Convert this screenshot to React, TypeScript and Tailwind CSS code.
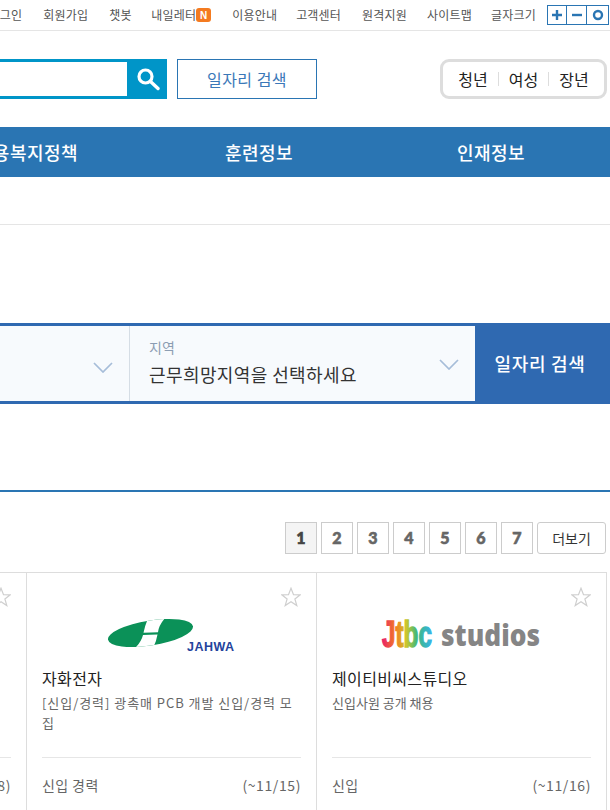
import React from "react";

const KR = { fontFamily: '"Noto Sans CJK KR", "Noto Sans", sans-serif' };

const topItems = [
  { t: "로그인", ml: "ml-0" },
  { t: "회원가입", ml: "ml-[21px]" },
  { t: "챗봇", ml: "ml-[21px]" },
  { t: "내일레터", ml: "ml-[19.5px]" },
  { t: "이용안내", ml: "ml-[21px]" },
  { t: "고객센터", ml: "ml-[19px]" },
  { t: "원격지원", ml: "ml-[21px]" },
  { t: "사이트맵", ml: "ml-[20px]" },
  { t: "글자크기", ml: "ml-[19px]" },
];

function SearchIcon() {
  return (
    <svg width="24" height="24" viewBox="0 0 24 24" fill="none" stroke="white">
      <circle cx="9.5" cy="9.5" r="6.5" strokeWidth="3.2" />
      <path d="M14.5 14.5 L22 21.5" strokeWidth="3.4" strokeLinecap="round" />
    </svg>
  );
}

function Chevron() {
  return (
    <svg width="20" height="11" viewBox="0 0 20 11" fill="none" stroke="#a6bdd9" strokeWidth="1.7">
      <path d="M1 1 L10 10 L19 1" />
    </svg>
  );
}

function StarIcon() {
  return (
    <svg width="20" height="20" viewBox="0 0 20 20" fill="none" stroke="#cfcfcf" strokeWidth="1.2">
      <polygon points="10,1.2 12.5,7.6 19.2,7.8 13.9,12 15.8,18.6 10,14.8 4.2,18.6 6.1,12 0.8,7.8 7.5,7.6" />
    </svg>
  );
}

function JahwaLogo() {
  return (
    <svg width="128" height="34" viewBox="0 0 128 34">
      <defs>
        <clipPath id="jahwaClip">
          <ellipse cx="42.5" cy="15" rx="43" ry="12.5" transform="rotate(-9 42.5 15)" />
        </clipPath>
      </defs>
      <ellipse cx="42.5" cy="15" rx="43" ry="12.5" fill="#0b9158" transform="rotate(-9 42.5 15)" />
      <g clipPath="url(#jahwaClip)" fill="#ffffff">
        <path d="M41 -2 L59 -2 Q51 6 50 14.2 L35.5 14.8 Q37 7 41 -2 Z" />
        <path d="M35 17 L49.5 16.4 Q48 25 44 32 L25 32 Q33 25 35 17 Z" />
      </g>
      <text x="79" y="32.5" fontFamily="Liberation Sans" fontWeight="700" fontSize="12.5" fill="#24439c" letterSpacing="0.5">JAHWA</text>
    </svg>
  );
}

function JtbcLogo() {
  return (
    <div className="flex items-start gap-[8px]">
      <svg width="52" height="34" viewBox="0 0 52 34">
        <defs>
          <linearGradient id="jtbcGrad" gradientUnits="userSpaceOnUse" x1="0" y1="0" x2="51" y2="0">
            <stop offset="0" stopColor="#e8176f" />
            <stop offset="0.3" stopColor="#f2821f" />
            <stop offset="0.5" stopColor="#c9c62f" />
            <stop offset="0.7" stopColor="#3fb87a" />
            <stop offset="1" stopColor="#37b3ea" />
          </linearGradient>
        </defs>
        <text
          x="1"
          y="28.5"
          fontFamily="Liberation Sans"
          fontWeight="700"
          fontSize="36"
          fill="url(#jtbcGrad)"
          stroke="url(#jtbcGrad)"
          strokeWidth="1.4"
          textLength="50"
          lengthAdjust="spacingAndGlyphs"
        >
          Jtbc
        </text>
      </svg>
      <svg width="102" height="34" viewBox="0 0 102 34">
        <text
          x="0"
          y="28"
          fontFamily="Open Sans"
          fontWeight="800"
          fontSize="30"
          fill="#858585"
          textLength="99"
          lengthAdjust="spacingAndGlyphs"
        >
          studios
        </text>
      </svg>
    </div>
  );
}

function JobCard({
  logo,
  title,
  desc,
  kind,
  date,
  wideDesc,
}: {
  logo?: React.ReactNode;
  title: string;
  desc: string;
  kind: string;
  date: string;
  wideDesc?: boolean;
}) {
  return (
    <div className="relative w-[290px] shrink-0 h-[240px] border-r border-[#dddddd] pt-[39px] px-[15px]">
      <div className="absolute right-[15px] top-[14px]">
        <StarIcon />
      </div>
      <div className="h-[54px] pt-[6px] flex justify-center items-start">{logo}</div>
      <div className="h-[24px] leading-[24px] text-[16px] tracking-[0.35px] text-[#222222]">{title}</div>
      <div className={`mt-[3px] h-[64px] text-[13px] leading-[20px] text-[#666666] ${wideDesc ? "tracking-[0.95px]" : ""}`}>{desc}</div>
      <div className="border-t border-[#e6e6e6] pt-[15px] flex justify-between text-[14px] leading-[24px] text-[#666666]">
        <span className="tracking-[0.4px]">{kind}</span>
        <span className="tracking-[0.6px]">{date}</span>
      </div>
    </div>
  );
}

export default function App() {
  return (
    <div className="w-[610px] h-[810px] overflow-hidden bg-white" style={KR}>
      {/* utility bar */}
      <div className="h-[31px] border-b border-[#e5e5e5] flex justify-end items-center pr-[1px] overflow-hidden">
        <div className="flex items-center text-[12px] text-[#555555] whitespace-nowrap tracking-[0.2px] shrink-0">
          {topItems.map(({ t, ml }) => (
            <span key={t} className={`flex items-center ${ml}`}>
              {t}
              {t === "내일레터" && (
                <span
                  className="w-[15px] h-[14px] rounded-[3px] bg-[#f47b20] text-white text-[10px] font-bold flex items-center justify-center tracking-normal"
                  style={{ fontFamily: "Liberation Sans" }}
                >
                  N
                </span>
              )}
            </span>
          ))}
        </div>
        <div className="ml-[11px] flex h-[20px] w-[62px] border border-[#2a75b3] shrink-0 text-[#2a75b3]">
          <div className="w-[19px] flex items-center justify-center border-r border-[#2a75b3]">
            <svg width="12" height="12" viewBox="0 0 12 12" stroke="#2a75b3" strokeWidth="2.4">
              <path d="M6 1 V11 M1 6 H11" />
            </svg>
          </div>
          <div className="w-[20px] flex items-center justify-center border-r border-[#2a75b3]">
            <svg width="12" height="12" viewBox="0 0 12 12" stroke="#2a75b3" strokeWidth="2.4">
              <path d="M1 6 H11" />
            </svg>
          </div>
          <div className="flex-1 flex items-center justify-center">
            <svg width="12" height="12" viewBox="0 0 12 12" fill="none" stroke="#2a75b3" strokeWidth="2.4">
              <circle cx="6" cy="6" r="4" />
            </svg>
          </div>
        </div>
      </div>

      {/* search row */}
      <div className="mt-[28px] h-[40px] flex justify-end pr-[3px] overflow-hidden">
        <div className="w-[300px] shrink-0 h-[40px] border-y-[3px] border-[#0095c8] flex justify-end">
          <div className="w-[40px] h-[40px] -my-[3px] bg-[#0095c8] flex items-center justify-center pl-[2px]">
            <SearchIcon />
          </div>
        </div>
        <div className="ml-[10px] w-[140px] h-[40px] shrink-0 border border-[#2a75b3] flex items-center justify-center text-[16px] tracking-[0.5px] text-[#3b78b8]">
          일자리 검색
        </div>
        <div className="ml-[123px] w-[167px] h-[40px] shrink-0 border-[3px] border-[#dddddd] rounded-[9px] flex items-center justify-center text-[16px] text-[#222222]">
          <span>청년</span>
          <span className="mx-[10px] w-px h-[14px] bg-[#dddddd]" />
          <span>여성</span>
          <span className="mx-[10px] w-px h-[14px] bg-[#dddddd]" />
          <span>장년</span>
        </div>
      </div>

      {/* main nav */}
      <div className="mt-[28px] h-[50px] bg-[#2a75b3] flex ml-[-89px] w-[700px] items-center text-white text-[18px] font-medium tracking-[0.5px]">
        <div className="w-[232px] text-center">고용복지정책</div>
        <div className="w-[232px] text-center">훈련정보</div>
        <div className="w-[232px] text-center">인재정보</div>
      </div>
      <div className="h-[48px] border-b border-[#e5e5e5]" />

      {/* job search band */}
      <div className="mt-[98px] h-[81px] flex">
        <div className="w-[475px] border-y-[3px] border-[#2f69b1] bg-[#f7fafd] flex">
          <div className="w-[130px] border-r border-[#d5dde5] flex justify-end items-center pr-[16px] pt-[8px]">
            <Chevron />
          </div>
          <div className="flex-1 relative pl-[19px] pt-[12px]">
            <div className="text-[14px] leading-[18px] text-[#8c9db3]">지역</div>
            <div className="mt-[5px] text-[18px] leading-[26px] tracking-[0.4px] text-[#333333]">근무희망지역을 선택하세요</div>
            <div className="absolute right-[16px] top-[33px]">
              <Chevron />
            </div>
          </div>
        </div>
        <div className="flex-1 bg-[#2f69b1] flex items-center justify-center text-white text-[18px] font-medium tracking-[0.7px] pr-[5px]">
          일자리 검색
        </div>
      </div>

      {/* section line */}
      <div className="mt-[86px] h-[2px] bg-[#2a75b3]" />

      {/* pagination */}
      <div className="mt-[30px] flex justify-end gap-[4px] pr-[4px]">
        {[1, 2, 3, 4, 5, 6, 7].map((n) => (
          <div
            key={n}
            className={`w-[32px] h-[32px] border border-[#cccccc] flex items-center justify-center text-[16px] font-black [-webkit-text-stroke:0.6px] ${n === 1 ? "bg-[#f4f4f4] text-[#444444]" : "bg-white text-[#666666]"}`}
            style={{ fontFamily: "Lato" }}
          >
            {n}
          </div>
        ))}
        <div className="w-[69px] h-[32px] border border-[#cccccc] rounded-[3px] flex items-center justify-center text-[14px] text-[#333333]">
          더보기
        </div>
      </div>

      {/* cards */}
      <div className="mt-[18px] ml-[-263px] flex w-[1160px]">
        <div className="flex border-t border-[#dddddd]">
          <JobCard title="" desc="" kind="신입" date="(~11/18)" />
          <JobCard
            logo={<JahwaLogo />}
            title="자화전자"
            desc="[신입/경력] 광촉매 PCB 개발 신입/경력 모집"
            kind="신입 경력"
            date="(~11/15)"
            wideDesc
          />
          <JobCard
            logo={<JtbcLogo />}
            title="제이티비씨스튜디오"
            desc="신입사원 공개 채용"
            kind="신입"
            date="(~11/16)"
          />
        </div>
      </div>
    </div>
  );
}
